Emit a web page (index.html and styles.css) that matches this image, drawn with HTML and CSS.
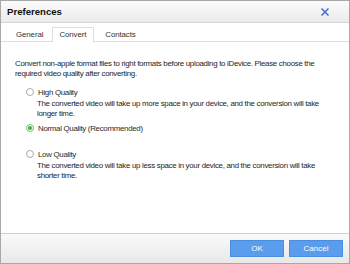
FILE: index.html
```html
<!DOCTYPE html>
<html lang="en">
<head>
    <meta charset="UTF-8">
    <title>Preferences</title>
    <link rel="stylesheet" href="styles.css">
</head>
<body>
    <div class="dialog">
        <div class="titlebar">
            <span class="title">Preferences</span>
            <svg class="close" width="8" height="8" viewBox="0 0 8 8">
                <path d="M0.5 0.5L7.5 7.5M7.5 0.5L0.5 7.5" stroke="#3a6fd8" stroke-width="1.5"/>
            </svg>
        </div>
        <div class="tabs">
            <div class="tab">General</div>
            <div class="tab active">Convert</div>
            <div class="tab">Contacts</div>
        </div>
        <div class="content">
            <p class="intro">Convert non-apple format files to right formats before uploading to iDevice. Please choose the required video quality after converting.</p>
            <div class="option">
                <div class="opt-head"><span class="radio"></span>High Quality</div>
                <p class="desc">The converted video will take up more space in your device, and the conversion will take longer time.</p>
            </div>
            <div class="option normal">
                <div class="opt-head"><span class="radio checked"></span>Normal Quality (Recommended)</div>
            </div>
            <div class="option">
                <div class="opt-head"><span class="radio"></span>Low Quality</div>
                <p class="desc">The converted video will take up less space in your device, and the conversion will take shorter time.</p>
            </div>
        </div>
        <div class="footer">
            <button class="btn">OK</button>
            <button class="btn">Cancel</button>
        </div>
    </div>
</body>
</html>
```
FILE: styles.css
```css
body {
    margin: 0;
    font-family: "Liberation Sans", Arial, sans-serif;
    font-size: 7.9px;
    letter-spacing: -0.3px;
    color: #1e1e1e;
}
.dialog {
    width: 350px;
    height: 264px;
    box-sizing: border-box;
    border: 1px solid #a8a8a8;
    display: flex;
    flex-direction: column;
    background: white;
}
.titlebar {
    height: 21px;
    flex-shrink: 0;
    display: flex;
    align-items: center;
    justify-content: space-between;
    padding: 0 20px 0 6px;
    background: linear-gradient(#fbfbfb, #ebebeb);
    border-bottom: 1px solid #d4d4d4;
}
.title {
    font-weight: bold;
    font-size: 9.6px;
    letter-spacing: 0;
    color: #111;
}
.tabs {
    display: flex;
    flex-shrink: 0;
    padding: 4px 0 0 4px;
    border-bottom: 1px solid #dedede;
    height: 14px;
    letter-spacing: -0.1px;
}
.tab {
    padding: 0 8px 0 10px;
    line-height: 14px;
    color: #333;
    border: 1px solid transparent;
    border-bottom: none;
    margin-bottom: -1px;
}
.tab.active {
    border-color: #dedede;
    background: white;
    height: 14px;
    padding: 0 7px 0 6px;
}
.content {
    flex: 1;
    padding: 17px 12px 0 14px;
}
.intro {
    margin: 0 0 7px;
    line-height: 10px;
}
.option {
    padding-left: 11px;
    margin-bottom: 3px;
}
.option.normal {
    margin-bottom: 14px;
}
.opt-head {
    display: flex;
    align-items: center;
    height: 12px;
    color: #2a2a2a;
}
.radio {
    width: 6px;
    height: 6px;
    border: 1px solid #aaa;
    border-radius: 50%;
    margin-right: 4px;
    background: white;
    position: relative;
}
.radio.checked {
    border-color: #6cc06c;
}
.radio.checked::after {
    content: "";
    position: absolute;
    left: 1px;
    top: 1px;
    width: 4px;
    height: 4px;
    border-radius: 50%;
    background: #3fae3f;
}
.desc {
    margin: 1px 0 0;
    padding-left: 11px;
    line-height: 10px;
}
.footer {
    height: 29px;
    flex-shrink: 0;
    border-top: 1px solid #cfcfcf;
    background: linear-gradient(#fafafa, #e8e8e8);
    display: flex;
    justify-content: flex-end;
    align-items: center;
    padding-right: 6px;
    gap: 5px;
}
.btn {
    width: 54px;
    height: 17px;
    border: 1px solid #4a8ee0;
    background: #5b9ded;
    color: white;
    font-family: inherit;
    font-size: 8px;
    padding: 0;
}
```
